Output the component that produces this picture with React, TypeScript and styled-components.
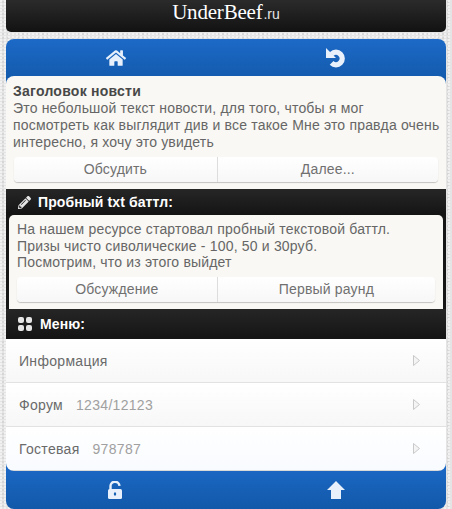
import React from 'react';
import styled, { createGlobalStyle } from 'styled-components';
import { FaHome, FaPencilAlt } from 'react-icons/fa';

const GlobalStyle = createGlobalStyle`
  html, body {
    margin: 0;
    padding: 0;
  }
  body {
    background-color: #e4e4e4;
    background-image:
      radial-gradient(circle at 1px 1px, #f1f1f1 1px, transparent 1px),
      radial-gradient(circle at 3px 2px, #d6d6d6 1px, transparent 1px);
    background-size: 4px 3px, 5px 4px;
    font-family: "Liberation Sans", Arial, sans-serif;
  }
`;

const Page = styled.div`
  width: 440px;
  height: 509px;
  margin: 0 auto;
  display: flex;
  flex-direction: column;
  overflow: hidden;
`;

const Header = styled.header`
  height: 32px;
  flex: none;
  margin-bottom: 7px;
  display: flex;
  align-items: flex-start;
  justify-content: center;
  background: linear-gradient(#2b2b2b, #121212);
  border-radius: 0 0 5px 5px;
  color: #fff;
  font-family: "Liberation Serif", "Times New Roman", serif;
  font-size: 21px;
  line-height: 24px;
  letter-spacing: -0.2px;
`;

const Domain = styled.span`
  font-family: "Liberation Sans", Arial, sans-serif;
  font-size: 14px;
  line-height: 28px;
  letter-spacing: 0;
  margin-left: 1px;
  color: #e6e6e6;
`;

const NavBar = styled.nav<{ $bottom?: boolean }>`
  flex: none;
  display: grid;
  grid-template-columns: 1fr 1fr;
  background: linear-gradient(#1c69c7, #1259a9);
  color: #e8f1fb;
  height: ${(p) => (p.$bottom ? '46px' : '45px')};
  margin-top: ${(p) => (p.$bottom ? '-8px' : '0')};
  margin-bottom: ${(p) => (p.$bottom ? '0' : '-8px')};
  padding: ${(p) => (p.$bottom ? '8px 0 0' : '0 0 8px')};
  box-sizing: border-box;
  border-radius: ${(p) => (p.$bottom ? '0 0 8px 8px' : '8px 8px 0 0')};
`;

const NavItem = styled.div`
  display: flex;
  align-items: center;
  justify-content: center;
  font-size: 20px;
`;

const NewsCard = styled.section`
  position: relative;
  flex: none;
  height: 113px;
  box-sizing: border-box;
  padding: 7px 4px 0 7px;
  background: #f9f8f4;
  border-radius: 8px 8px 0 0;
`;

const NewsTitle = styled.h2`
  margin: 0;
  font-size: 14px;
  line-height: 17px;
  font-weight: 700;
  color: #484848;
  letter-spacing: 0.25px;
`;

const Body = styled.p<{ $lineHeight?: number }>`
  margin: 0;
  font-size: 14px;
  line-height: ${(p) => p.$lineHeight ?? 17}px;
  letter-spacing: 0.18px;
  color: #666;
`;

const ButtonRow = styled.div<{ $gap: number; $left: number; $right: number }>`
  display: grid;
  grid-template-columns: 47.8% 52.2%;
  margin: ${(p) => p.$gap}px ${(p) => p.$right}px 0 ${(p) => p.$left}px;
  border-radius: 4px;
  box-shadow: 0 1px 1px rgba(0, 0, 0, 0.22);
  background: linear-gradient(#fff, #f7f7f7);
`;

const Button = styled.div`
  height: 25px;
  line-height: 25px;
  text-align: center;
  font-size: 14px;
  letter-spacing: 0.18px;
  color: #707070;
  & + & {
    border-left: 1px solid #ddd;
  }
`;

const SectionBar = styled.div<{ $height: number; $gap: number }>`
  flex: none;
  height: ${(p) => p.$height}px;
  box-sizing: border-box;
  display: flex;
  align-items: center;
  gap: ${(p) => p.$gap}px;
  padding-left: 12px;
  background: linear-gradient(#262626, #141414);
  color: #fff;
  font-size: 14px;
  font-weight: 700;
  letter-spacing: 0.1px;
  svg {
    flex: none;
    color: #e6e6e6;
  }
`;

const DarkFrame = styled.div`
  flex: none;
  height: 94px;
  box-sizing: border-box;
  background: #161616;
  padding: 0 3px;
`;

const BattleCard = styled.section`
  height: 100%;
  box-sizing: border-box;
  padding: 6px 8px 0;
  background: #f9f8f4;
  border-radius: 5px 5px 0 0;
`;

const Menu = styled.ul`
  position: relative;
  flex: none;
  height: 132px;
  margin: 0;
  padding: 0;
  list-style: none;
  border-radius: 0 0 8px 8px;
  overflow: hidden;
`;

const MenuRow = styled.li`
  height: 44px;
  box-sizing: border-box;
  display: flex;
  align-items: center;
  padding: 0 26px 0 13px;
  background: linear-gradient(#fff, #f7f7f7);
  border-bottom: 1px solid #e2e2e2;
  font-size: 14px;
  letter-spacing: 0.3px;
  color: #6a6a6a;
  &:last-child {
    background: linear-gradient(#fff, #f8fbff);
    border-bottom: 1px solid #d9d9d9;
  }
`;

const Count = styled.span`
  margin-left: 13px;
  color: #a0a0a0;
`;

const Arrow = styled.svg`
  margin-left: auto;
`;

const Chevron = () => (
  <Arrow width="7" height="11" viewBox="0 0 7 11">
    <path d="M.5.5v10L6.5 5.5z" fill="#f4f4f4" stroke="#c9c9c9" />
  </Arrow>
);

const UndoIcon = () => (
  <svg width="20" height="20" viewBox="0 0 20 20" fill="none">
    <path d="M5.6 6.1A6.2 6.2 0 1 1 5.6 14.9" stroke="currentColor" strokeWidth="5.4" />
    <path d="M0 0v10h10z" fill="currentColor" />
  </svg>
);

const LockIcon = () => (
  <svg width="16" height="18" viewBox="0 0 16 18">
    <path
      d="M2.5 9V5.5a4.5 4.5 0 0 1 9-0.6"
      fill="none"
      stroke="currentColor"
      strokeWidth="2.4"
    />
    <rect y="8" width="14" height="10" rx="1.5" fill="currentColor" />
    <ellipse cx="7" cy="13" rx="1.2" ry="1.8" fill="#1561b5" />
  </svg>
);

const GridIcon = () => (
  <svg width="14" height="14" viewBox="0 0 14 14" fill="currentColor">
    <rect x="0" y="0" width="6" height="6" rx="2" />
    <rect x="8" y="0" width="6" height="6" rx="2" />
    <rect x="0" y="8" width="6" height="6" rx="2" />
    <rect x="8" y="8" width="6" height="6" rx="2" />
  </svg>
);

const UpIcon = () => (
  <svg width="18" height="18" viewBox="0 0 18 18" fill="currentColor">
    <path d="M9 0l9 9h-4v9H4V9H0z" />
  </svg>
);

export default function App() {
  return (
    <>
      <GlobalStyle />
      <Page>
        <Header>
          UnderBeef<Domain>.ru</Domain>
        </Header>
        <NavBar>
          <NavItem>
            <FaHome />
          </NavItem>
          <NavItem>
            <UndoIcon />
          </NavItem>
        </NavBar>
        <NewsCard>
          <NewsTitle>Заголовок новсти</NewsTitle>
          <Body>
            Это небольшой текст новости, для того, чтобы я мог посмотреть как выглядит див и все
            такое Мне это правда очень интересно, я хочу это увидеть
          </Body>
          <ButtonRow $gap={6} $left={1} $right={4}>
            <Button>Обсудить</Button>
            <Button>Далее...</Button>
          </ButtonRow>
        </NewsCard>
        <SectionBar $height={26} $gap={7}>
          <FaPencilAlt size={13} />
          Пробный txt баттл:
        </SectionBar>
        <DarkFrame>
          <BattleCard>
            <Body $lineHeight={16.5}>
              На нашем ресурсе стартовал пробный текстовой баттл.
              <br />
              Призы чисто сиволические - 100, 50 и 30руб.
              <br />
              Посмотрим, что из этого выйдет
            </Body>
            <ButtonRow $gap={6} $left={0} $right={0}>
              <Button>Обсуждение</Button>
              <Button>Первый раунд</Button>
            </ButtonRow>
          </BattleCard>
        </DarkFrame>
        <SectionBar $height={30} $gap={8}>
          <GridIcon />
          Меню:
        </SectionBar>
        <Menu>
          <MenuRow>
            Информация
            <Chevron />
          </MenuRow>
          <MenuRow>
            Форум<Count>1234/12123</Count>
            <Chevron />
          </MenuRow>
          <MenuRow>
            Гостевая<Count>978787</Count>
            <Chevron />
          </MenuRow>
        </Menu>
        <NavBar $bottom>
          <NavItem>
            <LockIcon />
          </NavItem>
          <NavItem>
            <UpIcon />
          </NavItem>
        </NavBar>
      </Page>
    </>
  );
}
